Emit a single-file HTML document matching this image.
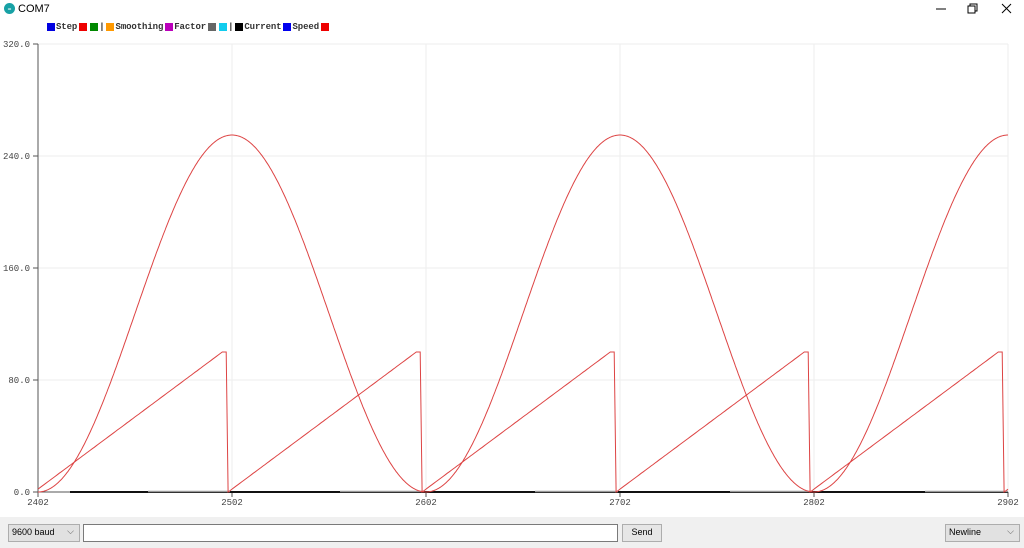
<!DOCTYPE html><html><head><meta charset="utf-8"><style>
body{margin:0;width:1024px;height:548px;background:#fff;position:relative;overflow:hidden;font-family:"Liberation Sans",sans-serif}
.t{position:absolute;left:18px;top:3px;font-size:11px;color:#000}
.lg{position:absolute;left:45px;top:22px;font:bold 9px "Liberation Mono",monospace;color:#333;display:flex;align-items:center;white-space:pre;letter-spacing:-0.1px}
.lg i{display:inline-block;width:8px;height:8px;margin:0 1.5px}
.bar{position:absolute;left:0;top:517px;width:1024px;height:31px;background:#f0f0f0}
.b{position:absolute;border:1px solid #adadad;font-size:9px;box-sizing:border-box;padding:2px 3px;background:#e6e6e6}
</style></head><body>
<svg style="position:absolute;left:4px;top:3px" width="11" height="11"><circle cx="5.5" cy="5.5" r="5.5" fill="#17a1a5"/><text x="5.5" y="7.5" font-size="5" fill="#fff" text-anchor="middle">∞</text></svg>
<div class="t">COM7</div>
<svg style="position:absolute;left:936px;top:3px" width="80" height="12" stroke="#000" fill="none" stroke-width="1"><path d="M0 6h10"/><path d="M32 3h7v7h-7zM34 3V1h7v7h-2"/><path d="M66 1l9 9M75 1l-9 9"/></svg>
<div class="lg"><i style="background:#0000e0"></i>Step<i style="background:#e00"></i><i style="background:#080"></i>|<i style="background:#f90"></i>Smoothing<i style="background:#b0b"></i>Factor<i style="background:#666"></i><i style="background:#1ce"></i>|<i style="background:#000"></i>Current<i style="background:#00e"></i>Speed<i style="background:#e00"></i></div>
<svg id="p" style="position:absolute;left:0;top:0" width="1024" height="517" font-family="Liberation Mono,monospace" font-size="9" fill="#444"></svg>
<div class="bar"></div>
<div class="b" style="left:8px;top:524px;width:72px;height:18px;background:#e1e1e1">9600 baud<span style="position:absolute;right:5px;top:1px;color:#555">⌵</span></div>
<div class="b" style="left:83px;top:524px;width:535px;height:18px;background:#fff;border-color:#7a7a7a"></div>
<div class="b" style="left:622px;top:524px;width:40px;height:18px;text-align:center">Send</div>
<div class="b" style="left:945px;top:524px;width:75px;height:18px;background:#e1e1e1">Newline<span style="position:absolute;right:5px;top:1px;color:#555">⌵</span></div>
<script>
var s='',X=t=>38+(t-2402)*1.94,Y=v=>492-v*1.4;
for(var i=0;i<=5;i++){var x=38+i*194;if(i)s+='<line x1="'+x+'" y1="44" x2="'+x+'" y2="492" stroke="#eee"/>';s+='<line x1="'+x+'" y1="492" x2="'+x+'" y2="497" stroke="#555"/><text x="'+x+'" y="505" text-anchor="middle">'+(2402+i*100)+'</text>';}
for(var v=0;v<=320;v+=80){var y=Y(v);if(v)s+='<line x1="38" y1="'+y+'" x2="1008" y2="'+y+'" stroke="#eee"/>';s+='<line x1="33" y1="'+y+'" x2="38" y2="'+y+'" stroke="#555"/><text x="30" y="'+(y+3)+'" text-anchor="end">'+v.toFixed(1)+'</text>';}
s+='<line x1="38" y1="44" x2="38" y2="492" stroke="#555"/><line x1="38" y1="492" x2="1008" y2="492" stroke="#555"/>';
s+='<line x1="70" y1="492" x2="1008" y2="492" stroke="#111" stroke-width="2"/>';
[[148,230],[340,424],[535,618],[730,812],[925,1008]].forEach(p=>{s+='<line x1="'+p[0]+'" y1="491.5" x2="'+p[1]+'" y2="491.5" stroke="#999" stroke-width="1.5"/>';});
var a='',b='';for(var t=2402;t<=2902;t+=0.5){var c=127.5*(1-Math.cos(2*Math.PI*(t-2402)/200));a+=(a?'L':'M')+X(t).toFixed(1)+' '+Y(c).toFixed(1);}
for(var t=2402;t<=2902;t++){var w=(t-2400)%100;b+=(b?'L':'M')+X(t).toFixed(1)+' '+Y(w*100/97>100?100:w*100/97).toFixed(1);}
s+='<path d="'+a+'" fill="none" stroke="#d44" stroke-width="1"/><path d="'+b+'" fill="none" stroke="#d44" stroke-width="1"/>';
document.getElementById('p').innerHTML=s;
</script>
</body></html>
